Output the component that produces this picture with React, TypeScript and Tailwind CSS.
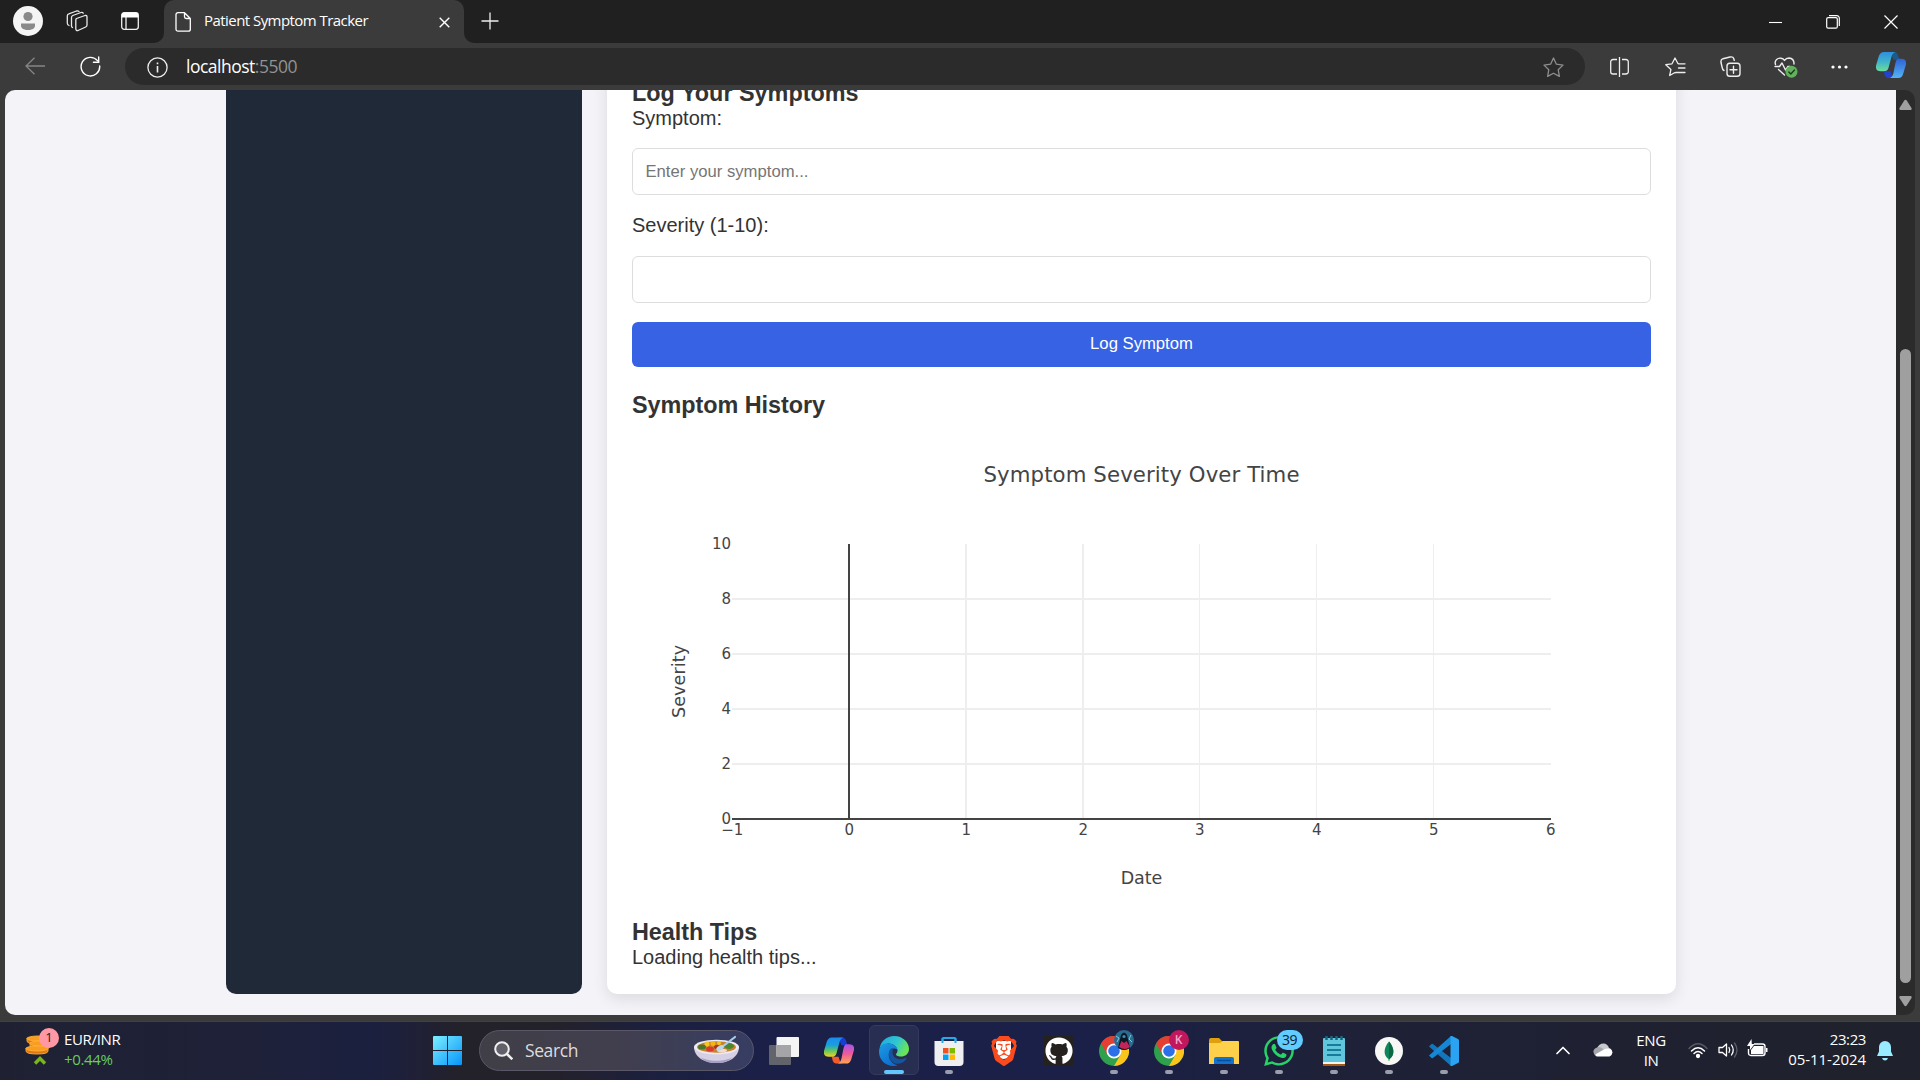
import type { ReactNode } from "react";
import { FaGithub, FaWhatsapp } from "react-icons/fa";
import { SiBrave } from "react-icons/si";

const UI = "font-['Open_Sans','Noto_Sans',sans-serif]";

/* ---------- browser chrome ---------- */

function TabStrip() {
  return (
    <div className="flex h-[43px] bg-[#202020] text-white">
      <div className="flex w-[164px] shrink-0 items-center">
        <svg className="ml-[13px] mt-[-1px] size-[30px]" viewBox="0 0 30 30">
          <circle cx="15" cy="15" r="15" fill="#f5f5f5" />
          <circle cx="15" cy="10.5" r="4.6" fill="#8a8a8a" />
          <path d="M8 17.500h14v2c0 3-3 4.500-7 4.500s-7-1.500-7-4.500z" fill="#8a8a8a" />
        </svg>
        <svg className="ml-[22px] mt-[-1px] size-[24px]" viewBox="0 0 24 24" fill="none" stroke="#e8e8e8" strokeWidth="1.300" strokeLinejoin="round" strokeLinecap="round">
          <path d="M11.500 9.500 L20 6.500 Q22 6 22 8 V16 Q22 17.500 20.700 18 L13 21.500 Q11 22 10.800 20 V11 Q10.800 10 11.500 9.500Z" />
          <path d="M7.500 18.500 Q6.500 18 6.500 17 V8.500 Q6.500 7 7.800 6.500 L16 3.500 Q17.500 3 18.200 4.200" />
          <path d="M4 16.500 Q2.300 16 2.300 14 V7 Q2.300 5.300 3.800 4.800 L11.500 2 Q13 1.600 14 2.500" />
        </svg>
        <svg className="ml-[32px] mt-[-1px] size-[18px]" viewBox="0 0 18 18" fill="none">
          <rect x=".7" y=".7" width="16.600" height="16.600" rx="2.500" stroke="#f2f2f2" strokeWidth="1.300" />
          <path d="M.7 5.500V3A2.300 2.300 0 0 1 3 .7h12A2.300 2.300 0 0 1 17.300 3v2.500z" fill="#fff" />
          <path d="M5 5v12" stroke="#f2f2f2" strokeWidth="1.300" />
        </svg>
      </div>
      <div className="relative flex w-[300px] shrink-0 items-center rounded-t-[10px] bg-[#3b3b3b]">
        <svg className="absolute bottom-0 left-[-10px] size-[10px]" viewBox="0 0 10 10"><path d="M10 0v10H0A10 10 0 0 0 10 0" fill="#3b3b3b" /></svg>
        <svg className="absolute bottom-0 right-[-10px] size-[10px]" viewBox="0 0 10 10"><path d="M0 0v10h10A10 10 0 0 1 0 0" fill="#3b3b3b" /></svg>
        <svg className="ml-[11px] mt-[1px] h-[20px] w-[16px]" viewBox="0 0 16 20" fill="none" stroke="#fff" strokeWidth="1.300" strokeLinejoin="round">
          <path d="M3 .7h6.500L15.300 6.500V17.200a2 2 0 0 1-2 2H3a2 2 0 0 1-2-2V2.700a2 2 0 0 1 2-2zM9.500.7v4a1.800 1.800 0 0 0 1.800 1.800h4" />
        </svg>
        <span className={`${UI} ml-[13px] mt-[-2px] w-[171px] whitespace-nowrap text-[15px] tracking-[-0.55px]`}>Patient Symptom Tracker</span>
        <svg className="ml-[64px] mt-[1px] size-[11px]" viewBox="0 0 11 11" stroke="#fff" strokeWidth="1.400"><path d="M.7.7l9.600 9.600M10.300.7L.7 10.300" /></svg>
      </div>
      <svg className="ml-[17px] mt-[12px] size-[18px]" viewBox="0 0 18 18" stroke="#eee" strokeWidth="1.300"><path d="M9 .5v17M.5 9h17" /></svg>
      <div className="ml-auto flex items-center pr-[22px]">
        <svg className="h-[14px] w-[13px]" viewBox="0 0 13 14" stroke="#fff" strokeWidth="1.100"><path d="M0 7.500h13" /></svg>
        <svg className="ml-[44px] size-[14px]" viewBox="0 0 14 14" fill="none" stroke="#fff" strokeWidth="1.200"><rect x=".7" y="2.600" width="10.600" height="10.600" rx="1.500" /><path d="M3 .7h7.800a2.500 2.500 0 0 1 2.500 2.500V11" /></svg>
        <svg className="ml-[44px] size-[14px]" viewBox="0 0 14 14" stroke="#fff" strokeWidth="1.200"><path d="M.5.500l13 13M13.500.5l-13 13" /></svg>
      </div>
    </div>
  );
}

function CopilotEdge() {
  return (
    <svg className="ml-[28px] mt-[-2px] h-[27px] w-[30px]" viewBox="0 0 31 28">
      <defs>
        <linearGradient id="ce1" x1="0" y1="0" x2="0" y2="1"><stop offset="0" stopColor="#2f8fe0" /><stop offset=".5" stopColor="#3fb3cc" /><stop offset="1" stopColor="#6fdc9a" /></linearGradient>
        <linearGradient id="ce2" x1="0" y1="0" x2="0" y2="1"><stop offset="0" stopColor="#2f62d6" /><stop offset="1" stopColor="#55b4f5" /></linearGradient>
      </defs>
      <path d="M15 0h4q3 0 4 4l1 4h-6z" fill="#1c5a8c" />
      <path d="M8 20h7l1 3q1 4 4 4h-6q-4 0-5-3z" fill="#2242cf" />
      <path d="M8 0h12q-3 1-4 5l-3 11q-1 4-5 4H5q-6 0-5-6l3-10q1.500-4 5-4z" fill="url(#ce1)" />
      <path d="M23 7h3q6 0 5 6l-3 10q-1.500 4-5 4H14q3-1 4-5l2-10q1-5 3-5z" fill="url(#ce2)" />
    </svg>
  );
}

function Toolbar() {
  return (
    <div className="flex h-[47px] items-start bg-[#3b3b3b] pt-[5px]">
      <div className="flex h-[37px] w-[125px] shrink-0 items-center">
        <svg className="ml-[25px] mt-[-1px] h-[18px] w-[20px]" viewBox="0 0 20 18" fill="none" stroke="#858585" strokeWidth="1.300"><path d="M20 9H1M9.500.7L1 9l8.500 8.300" /></svg>
        <svg className="ml-[35px] size-[21px]" viewBox="0 0 21 21" fill="none" stroke="#fff" strokeWidth="1.400" strokeLinecap="round"><path d="M19.700 10A9.300 9.300 0 1 1 17.500 4.600M18.700 1v5.300h-5.300" /></svg>
      </div>
      <div className="flex h-[37px] w-[1460px] shrink-0 items-center rounded-full bg-[#2b2b2b]">
        <svg className="ml-[22px] mt-[2px] size-[21px]" viewBox="0 0 21 21" fill="none" stroke="#eee" strokeWidth="1.300"><circle cx="10.500" cy="10.500" r="9.600" /><path d="M10.500 9v6.500M10.500 5.500v1.800" strokeWidth="1.600" /></svg>
        <span className={`${UI} ml-[18px] mt-[-1px] text-[17.5px] tracking-[-0.5px] text-white`}>localhost<span className="text-[#929292]">:5500</span></span>
        <svg className="ml-auto mr-[21px] mt-[1px] size-[21px]" viewBox="0 0 21 21" fill="none" stroke="#8e8e8e" strokeWidth="1.300" strokeLinejoin="round"><path d="M10.500 1l2.900 6.200 6.600.9-4.800 4.600 1.200 6.700-5.900-3.200-5.900 3.200 1.200-6.700L1 8.100l6.600-.9z" /></svg>
      </div>
      <div className="flex h-[37px] items-center text-white">
        <svg className="ml-[25px] h-[20px] w-[19px]" viewBox="0 0 19 20" fill="none" stroke="#eee" strokeWidth="1.300"><path d="M7 2.500H3A2.300 2.300 0 0 0 .7 4.800v9.900A2.300 2.300 0 0 0 3 17h4M12 2.500h4a2.300 2.300 0 0 1 2.300 2.300v9.900A2.300 2.300 0 0 1 16 17h-4M9.500 0v20" /></svg>
        <svg className="ml-[36px] h-[20px] w-[21px]" viewBox="0 0 21 20" fill="none" stroke="#eee" strokeWidth="1.300" strokeLinejoin="round" strokeLinecap="round"><path d="M9.500 15.800L4.700 18.500l1.200-6L.8 7.700l6.200-.9L10 1l2.900 5.500M13.500 6.800H20M13.500 11H20M11 15.500h9M9.500 15.800l1.500-.3" /></svg>
        <svg className="ml-[34px] h-[21px] w-[21px]" viewBox="0 0 21 21" fill="none" stroke="#eee" strokeWidth="1.400" strokeLinecap="round"><rect x="7" y="7.300" width="13" height="13" rx="2.800" /><path d="M13.500 10.300v7M10 13.800h7M4 14.500q-1.300-.5-1.700-2.500L1 6.500Q.5 3.500 3 2.700L10 1q3-.7 3.800 1.800l.4 1.500" /></svg>
        <svg className="ml-[33px] mt-[3px] h-[22px] w-[24px]" viewBox="0 0 24 22" fill="none" stroke="#eee" strokeWidth="1.400" strokeLinejoin="round" strokeLinecap="round">
          <path d="M1.500 7.500C0 3 4 .8 7 1.200q2.300.3 3.500 2.300Q12 1 15 1q5.200.5 5 6M1 9.500h4.500L8 6l3.500 7 2.500-3.500h2M4.500 12.500l6 5.500" />
          <circle cx="17.500" cy="14.800" r="6" fill="#62b15c" stroke="none" /><path d="M14.800 15l2 2 3.700-4" stroke="#1e3a1c" />
        </svg>
        <svg className="ml-[33px] h-[4px] w-[17px]" viewBox="0 0 17 4" fill="#fff"><circle cx="2" cy="2" r="1.600" /><circle cx="8.500" cy="2" r="1.600" /><circle cx="15" cy="2" r="1.600" /></svg>
        <CopilotEdge />
      </div>
    </div>
  );
}

/* ---------- page ---------- */

const xTicks = [
  { v: "−1", x: 100 }, { v: "0", x: 217 }, { v: "1", x: 334 }, { v: "2", x: 451 },
  { v: "3", x: 567.5 }, { v: "4", x: 684.5 }, { v: "5", x: 801.5 }, { v: "6", x: 918.5 },
];
const yTicks = [0, 2, 4, 6, 8, 10];

function SeverityChart() {
  return (
    <svg className="block h-[500px] w-[1019px] font-['DejaVu_Sans',Verdana,sans-serif]" viewBox="0 0 1019 500" fill="#444">
      <g shapeRendering="crispEdges">
        {xTicks.slice(2, 7).map((t) => (
          <line key={t.v} x1={t.x} x2={t.x} y1="125" y2="400" stroke="#eee" strokeWidth={t.x % 1 ? 1 : 2} />
        ))}
        {yTicks.slice(1, 5).map((v) => (
          <line key={v} x1="100" x2="919" y1={400 - v * 27.5} y2={400 - v * 27.5} stroke="#eee" strokeWidth="2" />
        ))}
        <line x1="217" x2="217" y1="125" y2="400" stroke="#444" strokeWidth="2" />
        <line x1="100" x2="919" y1="400" y2="400" stroke="#444" strokeWidth="2" />
      </g>
      <text x="509.500" y="62.500" textAnchor="middle" fontSize="21.250" textLength="316">Symptom Severity Over Time</text>
      {xTicks.map((t) => (
        <text key={t.v} x={t.x + 0.3} y="416" textAnchor="middle" fontSize="15">{t.v}</text>
      ))}
      {yTicks.map((v) => (
        <text key={v} x="99" y={405.3 - v * 27.5} textAnchor="end" fontSize="15">{v}</text>
      ))}
      <text x="509.500" y="464.500" textAnchor="middle" fontSize="17.500" textLength="41.500">Date</text>
      <text transform="translate(53 262.500) rotate(-90)" textAnchor="middle" fontSize="17.500" textLength="73">Severity</text>
    </svg>
  );
}

function PageView() {
  return (
    <div className="flex h-[925px] bg-[#3b3b3b] pl-[5px] pr-[5px]">
      <div className="flex h-[925px] w-[1891px] items-end overflow-hidden rounded-l-[10px] bg-[#f3f3f8] pb-[21px] pl-[221px] font-['Liberation_Sans',Arial,sans-serif] text-[20px] leading-[23px] text-[#333]">
        <aside className="h-[960px] w-[356px] shrink-0 rounded-[10px] bg-[#202938]" />
        <main className="ml-[25px] w-[1069px] shrink-0 rounded-[10px] bg-white px-[25px] pb-[25px] pt-[40px] shadow-[0_5px_15px_rgba(0,0,0,0.1)]">
          <h3 className="text-[23.4px] font-bold leading-[27px]">Log Your Symptoms</h3>
          <label className="block">Symptom:</label>
          <input className="mt-[18px] block h-[47px] w-full rounded-[6px] border border-[#ddd] px-[12.5px] text-[16.67px] placeholder:text-[#757575]" placeholder="Enter your symptom..." />
          <label className="mt-[19px] block">Severity (1-10):</label>
          <input className="mt-[19px] block h-[47px] w-full rounded-[6px] border border-[#ddd] px-[12.5px]" />
          <button className="mt-[19px] block h-[45px] w-full rounded-[6px] bg-[#3862e4] pb-[2px] text-[16.67px] text-white">Log Symptom</button>
          <h3 className="mt-[25px] text-[23.4px] font-bold leading-[27px] tracking-[-0.05px]">Symptom History</h3>
          <SeverityChart />
          <h3 className="text-[23.4px] font-bold leading-[27px] tracking-[-0.05px]">Health Tips</h3>
          <p>Loading health tips...</p>
        </main>
      </div>
      <div className="flex w-[19px] flex-col items-center rounded-r-[10px] bg-[#2b2b2b]">
        <svg className="mt-[9px] h-[11px] w-[13px]" viewBox="0 0 13 11" fill="#9f9f9f"><path d="M5.300 1.500Q6.500 0 7.700 1.500L12.500 9q.6 2-1 2h-10q-1.600 0-1-2z" /></svg>
        <div className="mt-[239px] h-[634px] w-[11px] rounded-full bg-[#9f9f9f]" />
        <svg className="mt-[13px] h-[11px] w-[13px]" viewBox="0 0 13 11" fill="#9f9f9f"><path d="M5.300 9.500Q6.500 11 7.700 9.500L12.500 2q.6-2-1-2h-10q-1.600 0-1 2z" /></svg>
      </div>
    </div>
  );
}

/* ---------- taskbar ---------- */

function Slot({ children, mark, active }: { children: ReactNode; mark?: boolean; active?: boolean }) {
  return (
    <div className="relative flex h-[57px] w-[55px] shrink-0 items-center justify-center">
      {active && <div className="absolute inset-x-[2.5px] top-[3px] h-[50px] rounded-[6px] border border-[#333b5c] bg-[#272e52]" />}
      <div className="relative flex size-[30px] items-center justify-center">{children}</div>
      {mark && <div className="absolute bottom-[5px] h-[4px] w-[8px] rounded-full bg-[#9a9dac]" />}
      {active && <div className="absolute bottom-[5px] h-[4px] w-[20px] rounded-full bg-[#60c8ff]" />}
    </div>
  );
}

function Chrome() {
  return (
    <svg className="size-[30px]" viewBox="0 0 48 48">
      <circle cx="24" cy="24" r="24" fill="#2fa04c" />
      <path d="M3.200 12A24 24 0 0 1 44.800 12H24L13.600 30z" fill="#e53e32" />
      <path d="M44.800 12A24 24 0 0 1 24 48L34.400 30 24 12z" fill="#fcc51c" />
      <circle cx="24" cy="24" r="12" fill="#fff" /><circle cx="24" cy="24" r="9.300" fill="#2c6fe8" />
    </svg>
  );
}

function Edge() {
  return (
    <svg className="size-[30px]" viewBox="0 0 30 30">
      <defs>
        <linearGradient id="e1" x1="0" y1="0" x2="1" y2=".4"><stop offset="0" stopColor="#1fa5dd" /><stop offset=".6" stopColor="#2fc6d2" /><stop offset="1" stopColor="#69e45a" /></linearGradient>
        <linearGradient id="e2" x1="0" y1="0" x2=".6" y2="1"><stop offset="0" stopColor="#1f9be3" /><stop offset="1" stopColor="#0c6fd0" /></linearGradient>
      </defs>
      <path d="M.5 13C1.500 5 8 0 15 0c9 0 15 6.500 15 13 0 5-4 7.500-8 7.500-3.500 0-5.500-1.500-5-2.500.5-.8 1.500-1.500 1.500-3.500C18.500 10 12 6 6.500 8 3 9.200 1 11.500.5 13z" fill="url(#e1)" />
      <path d="M0 15.500C.2 11 4 7.500 9 7.500c5.500 0 9.500 3 9.500 7-.5-2.500-7-3.500-8.500 2.500-1.500 6.500 4 11.500 8.500 12.300-2 .7-3.500.7-4 .7C6 30 0 23.500 0 15.500z" fill="url(#e2)" />
      <path d="M12.300 12.500C9 14.500 9 21 12.500 25c4 4.500 11 3.500 14.500-1.500.8-1.200 0-1.800-1-1.300-6 2.800-12-.2-12.500-5.200-.2-2 .3-3.300 1-4.200-.7-.6-1.500-.7-2.200-.3z" fill="#15549f" />
    </svg>
  );
}

function Copilot() {
  return (
    <svg className="h-[28px] w-[30px]" viewBox="0 0 31 28">
      <defs>
        <linearGradient id="c1" x1="0" y1="0" x2="0" y2="1"><stop offset="0" stopColor="#1b8bf0" /><stop offset=".4" stopColor="#18a0dc" /><stop offset=".7" stopColor="#66c85a" /><stop offset="1" stopColor="#f7d21c" /></linearGradient>
        <linearGradient id="c2" x1="0" y1="0" x2="0" y2="1"><stop offset="0" stopColor="#a653ea" /><stop offset=".5" stopColor="#f05a9a" /><stop offset="1" stopColor="#ffa552" /></linearGradient>
      </defs>
      <path d="M15 0h4q3 0 4 4l1 4h-6z" fill="#173fd0" />
      <path d="M8 20h7l1 3q1 4 4 4h-6q-4 0-5-3z" fill="#f2592c" />
      <path d="M8 0h12q-3 1-4 5l-3 11q-1 4-5 4H5q-6 0-5-6l3-10q1.500-4 5-4z" fill="url(#c1)" />
      <path d="M23 7h3q6 0 5 6l-3 10q-1.500 4-5 4H14q3-1 4-5l2-10q1-5 3-5z" fill="url(#c2)" />
    </svg>
  );
}

function Bowl() {
  return (
    <svg className="h-[29px] w-[47px]" viewBox="0 0 47 29">
      <path d="M1 11.500C1 22 11 28 23.500 28S46 22 46 11.500z" fill="#d6d0e4" />
      <path d="M8 22c5 5 26 5 31 0-4 8-27 8-31 0z" fill="#a79fc4" />
      <ellipse cx="23.500" cy="12" rx="22.500" ry="7.300" fill="#eeeaf5" />
      <ellipse cx="23.500" cy="12" rx="19.500" ry="5.800" fill="#c98330" />
      <circle cx="14" cy="9" r="2.500" fill="#f6c51e" /><circle cx="20" cy="8.500" r="2.500" fill="#f3b613" /><circle cx="26" cy="8" r="2" fill="#f6c51e" />
      <ellipse cx="9" cy="12" rx="4" ry="2.500" fill="#467a2a" /><ellipse cx="36" cy="11" rx="5" ry="3" fill="#4e8630" />
      <ellipse cx="17" cy="14" rx="4" ry="2.500" fill="#d93c26" /><ellipse cx="24" cy="12" rx="3" ry="2" fill="#b82f1d" /><ellipse cx="29" cy="15.500" rx="5" ry="1.800" fill="#f6dcc4" />
      <path d="M42 2L29 12" stroke="#a9cdeb" strokeWidth="2.200" strokeLinecap="round" /><ellipse cx="27" cy="13" rx="4" ry="2.300" transform="rotate(-30 27 13)" fill="#b8d8f0" />
    </svg>
  );
}

function Taskbar() {
  return (
    <div className={`${UI} flex h-[59px] border-t border-[#3d3f4e] bg-[linear-gradient(90deg,#1f2133_0px,#1e2138_250px,#1b2040_370px,#202036_420px,#232129_460px,#232129_550px,#1c2040_660px,#1a2048_760px,#1a2048_1100px,#1e2138_1320px,#1f2132_1600px,#1f212c_1920px)] text-white`}>
      <div className="flex w-[433px] shrink-0">
        <div className="relative ml-[25px] mt-[6px] h-[40px] w-[36px]">
          <svg className="h-[40px] w-[26px]" viewBox="0 0 26 40">
            <g stroke="#ffb13d" strokeWidth=".9">
              <path d="M2 10v3q0 3 11 3t11-3v-3z" fill="#df7610" /><ellipse cx="13" cy="10.500" rx="11" ry="2.500" fill="#f99c1f" />
              <path d="M5 15v3q0 3 10 3t10-3v-3z" fill="#df7610" /><ellipse cx="15" cy="15.500" rx="10" ry="2.500" fill="#f99c1f" />
              <path d="M1 20v3q0 3 11 3t11-3v-3z" fill="#df7610" /><ellipse cx="12" cy="20.500" rx="11" ry="2.500" fill="#f99c1f" />
            </g>
            <path d="M10 35.500l5-5 5 5" fill="none" stroke="#7ab51d" strokeWidth="3.400" />
          </svg>
          <div className="absolute left-[14px] top-0 flex size-[20px] items-center justify-center rounded-full bg-[#ff98a4] text-[13px] text-[#222]">1</div>
        </div>
        <div className="ml-[3px] mt-[7px] text-[15px] leading-[20px] tracking-[-0.35px]">
          <div>EUR/INR</div>
          <div className="text-[#6ccb5f]">+0.44%</div>
        </div>
      </div>
      <svg className="mt-[14px] size-[29px] shrink-0" viewBox="0 0 29 29">
        <defs><linearGradient id="win" x1="0" y1="0" x2="1" y2="1"><stop offset="0" stopColor="#7cefff" /><stop offset="1" stopColor="#0694fa" /></linearGradient></defs>
        <path d="M1 0h13v14H0V1q0-1 1-1zM15 0h13q1 0 1 1v13H15zM0 15h14v14H1q-1 0-1-1zM15 15h14v13q0 1-1 1H15z" fill="url(#win)" />
      </svg>
      <div className="ml-[17px] mt-[8px] flex h-[41px] w-[275px] shrink-0 items-center rounded-full border border-[#5a5868] bg-[linear-gradient(90deg,#403e46,#413f4e_50%,#373d62)]">
        <svg className="ml-[14px] size-[19px]" viewBox="0 0 19 19" fill="#62616a" stroke="#f0f0f0" strokeWidth="2"><circle cx="8" cy="8" r="6.800" /><path d="M13 13l5.300 5.300" strokeWidth="2.500" /></svg>
        <span className="ml-[12px] text-[17.5px] tracking-[-0.4px] text-[#dcdcdf]">Search</span>
        <div className="ml-auto mr-[13px] mt-[-2px]"><Bowl /></div>
      </div>
      <div className="ml-[2px] flex">
        <Slot><svg className="h-[28px] w-[30px]" viewBox="0 0 30 28"><rect y="8" width="22" height="20" rx="1" fill="#62636b" /><rect x="7.500" width="22.500" height="20" rx="1" fill="#f4f4f5" /><path d="M7.500 8H22v12H7.500z" fill="#a5a5a8" /></svg></Slot>
        <Slot><Copilot /></Slot>
        <Slot active><Edge /></Slot>
        <Slot mark>
          <svg className="size-[30px]" viewBox="0 0 30 30">
            <path d="M8.500 7V3q0-1 1-1h11q1 0 1 1v4" fill="none" stroke="#28a9e6" strokeWidth="2" />
            <path d="M.5 5h29v21q0 4-4 4H4.500q-4 0-4-4z" fill="#efeff1" />
            <path d="M8.500 2v5M21.500 2v5" stroke="#28a9e6" strokeWidth="2" />
            <path d="M9 12h5.500v5.500H9z" fill="#f25022" /><path d="M15.500 12H21v5.500h-5.500z" fill="#7fba00" /><path d="M9 18.500h5.500V24H9z" fill="#00a4ef" /><path d="M15.500 18.500H21V24h-5.500z" fill="#ffb900" />
          </svg>
        </Slot>
        <Slot>
          <div className="absolute top-[5px] h-[18px] w-[15px] rounded-b-[8px] bg-white" />
          <SiBrave className="relative size-[30px] text-[#fb4a1c]" />
        </Slot>
        <Slot><div className="flex size-[30px] items-center justify-center bg-[#24211f]"><FaGithub className="size-[28px] text-white" /></div></Slot>
        <Slot mark>
          <Chrome />
          <svg className="absolute left-[15px] top-[-6px] size-[20px]" viewBox="0 0 20 20"><circle cx="10" cy="10" r="10" fill="#2b6c8e" /><path d="M4 18L7 5q3-5 6 0l3 13q-6 4-12 0z" fill="#0d1827" /><path d="M5 17l2.500-6 2.500 2 2.500-2 3.500 6q-5 4-11 0z" fill="#c42458" /><circle cx="10" cy="6.500" r="1.600" fill="#3a8fb5" /><path d="M2 6l3 2-2 4M17 5l-2 4 3 3" stroke="#7ecbe6" fill="none" strokeWidth="1" /></svg>
        </Slot>
        <Slot mark>
          <Chrome />
          <div className="absolute left-[15px] top-[-6px] flex size-[20px] items-center justify-center rounded-full bg-[#c0175d] text-[12px] font-semibold text-[#f0a5c5]">K</div>
        </Slot>
        <Slot mark>
          <svg className="size-[30px]" viewBox="0 0 30 30">
            <path d="M0 4q0-2 2-2h8l3 3h5v6H0z" fill="#dfa00d" />
            <path d="M0 7h11l3-2h15q1 0 1 1v22H0z" fill="#ffd04a" />
            <path d="M5 28v-5q0-2 2-2h16q2 0 2 2v5z" fill="#1272cf" /><path d="M8 24.500h14" stroke="#0a4d98" strokeWidth="1.500" />
          </svg>
        </Slot>
        <Slot mark>
          <FaWhatsapp className="size-[34px] shrink-0 text-[#25d366]" />
          <div className="absolute left-[13px] top-[-6px] flex h-[20px] w-[26px] items-center justify-center rounded-full bg-[#60ccff] text-[14px] tracking-[-0.6px] text-[#10202c]">39</div>
        </Slot>
        <Slot mark>
          <svg className="h-[30px] w-[22px]" viewBox="0 0 22 30">
            <rect y="2" width="22" height="27.500" rx="1" fill="#5fc6dc" /><path d="M0 26h22v2H0z" fill="#f3f3f3" /><path d="M0 28h22v2H0z" fill="#a75714" />
            <path d="M4 9h14M4 14h14M4 19h14" stroke="#147c98" strokeWidth="1.800" /><path d="M3.500 0v4M8.500 0v4M13.500 0v4M18.500 0v4" stroke="#1b657c" strokeWidth="2.500" />
          </svg>
        </Slot>
        <Slot mark>
          <svg className="size-[28px]" viewBox="0 0 28 28"><circle cx="14" cy="14" r="14" fill="#f7f7f5" /><path d="M14 4.500c6 7 5.500 14 .6 17.500l-.3 2h-.6l-.3-2C8.500 18.500 8 11.500 14 4.500z" fill="#10865b" /><path d="M14 4.500c6 7 5.500 14 .6 17.500H14z" fill="#0a6845" /></svg>
        </Slot>
        <Slot mark>
          <svg className="size-[30px]" viewBox="0 0 30 30">
            <path d="M0 10.500l2.500-2.500q.7-.5 1.400 0L22 22v8z" fill="#1276bd" /><path d="M0 19.500l2.500 2.500q.7.500 1.400 0L22 8V0z" fill="#1687d2" />
            <path d="M21.500 0q.7-.3 1.500 0l6 3q1 .5 1 1.500v21q0 1-1 1.500l-6 3q-.8.300-1.500 0z" fill="#2ba3f3" />
          </svg>
        </Slot>
      </div>
      <div className="ml-auto flex">
        <svg className="mt-[24px] h-[9px] w-[14px]" viewBox="0 0 14 9" fill="none" stroke="#fff" strokeWidth="1.700" strokeLinecap="round" strokeLinejoin="round"><path d="M1 7.500L7 1.500l6 6" /></svg>
        <svg className="ml-[23px] mt-[21px] h-[14px] w-[20px]" viewBox="0 0 20 14"><path d="M4 13a4 4 0 0 1 0-7.700Q6 .5 10.500.5q4 0 5.500 4.500a4.200 4.200 0 0 1 0 8z" fill="#c9c9cd" /><path d="M4 4.500Q8 3 11 7l-9 5Q-2 7 4 4.500z" fill="#a4a5aa" /><path d="M3 11l8-4.500q4-2 7 0 3.500 4-1.500 7H4Q1.500 13 3 11z" fill="#fff" /></svg>
        <div className="ml-[18px] mt-[8px] w-[40px] text-center text-[15px] leading-[20px] tracking-[-0.4px]"><div>ENG</div><div>IN</div></div>
        <svg className="ml-[17px] mt-[20px] h-[17px] w-[20px]" viewBox="0 0 20 17" fill="none" stroke="#fff" strokeWidth="1.500" strokeLinecap="round"><path d="M1 6.500q9-9.500 18 0" stroke="#575965" /><path d="M3.500 9q6.500-6.500 13 0M6 11.500q4-4 8 0" /><circle cx="10" cy="14" r="1.400" fill="#fff" /></svg>
        <svg className="ml-[10px] mt-[19px] h-[18px] w-[20px]" viewBox="0 0 20 18" fill="none" stroke="#fff" strokeWidth="1.300" strokeLinecap="round" strokeLinejoin="round"><path d="M1 6.500h3.500L8.500 3v12L4.500 11.500H1zM11 6.500q1.500 2.500 0 5M13.500 4q3.500 5 0 10" /><path d="M16.500 2q5 7 0 14" stroke="#5b5d69" /></svg>
        <svg className="ml-[9px] mt-[17px] h-[18px] w-[21px]" viewBox="0 0 21 18"><path d="M7 5h8.500q2.500 0 2.500 2.500v6.500q0 2.500-2.500 2.500H4Q1.500 16.500 1.500 14v-4" fill="none" stroke="#fff" strokeWidth="1.400" /><path d="M7 7h9.500v8H4V11z" fill="#fff" /><path d="M19 9v4h1.500V9zM4.500 0L0 7h3v4l4.500-6H4.800z" fill="#fff" /></svg>
        <div className="ml-[15px] mt-[7px] w-[83px] whitespace-nowrap text-right text-[15px] leading-[20px]"><div className="tracking-[-0.4px]">23:23</div><div className="tracking-[-0.05px]">05-11-2024</div></div>
        <svg className="ml-[11px] mr-[27px] mt-[19px] h-[20px] w-[16px]" viewBox="0 0 16 20" fill="#99ebff"><path d="M8 0a6 6 0 0 1 6 6v4.500l2 4.500H0l2-4.500V6a6 6 0 0 1 6-6zM5 17h6q-.8 2.500-3 2.500T5 17z" /></svg>
      </div>
    </div>
  );
}

export default function App() {
  return (
    <div className="flex h-[1080px] w-[1920px] flex-col overflow-hidden bg-[#3b3b3b]">
      <TabStrip />
      <Toolbar />
      <PageView />
      <div className="h-[6px] shrink-0" />
      <Taskbar />
    </div>
  );
}
